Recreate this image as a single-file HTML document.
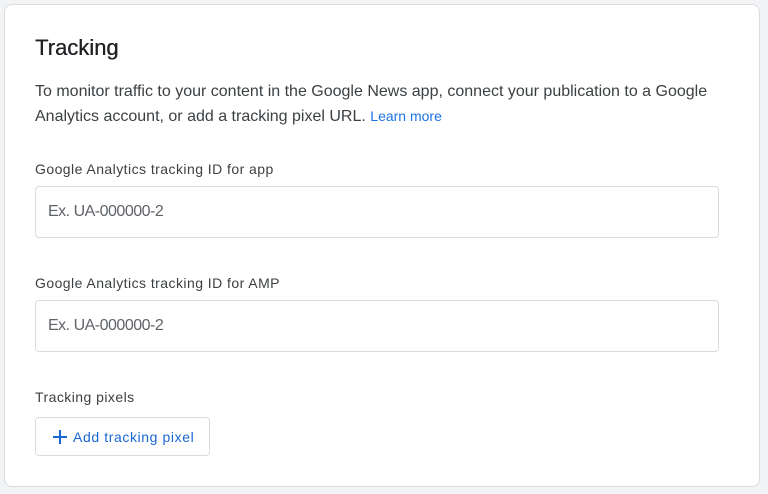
<!DOCTYPE html>
<html><head><style>
body{margin:0;width:768px;height:494px;background:#f1f3f4;font-family:"Liberation Sans",sans-serif;position:relative;overflow:hidden}
.card{position:absolute;left:4px;top:4px;width:754px;height:481px;background:#fff;border:1px solid #dadce0;border-radius:8px}
.a{position:absolute;white-space:nowrap}
.t{left:35px;top:35px;font-size:22px;color:#202124;text-shadow:0.3px 0 0 #202124}
.p{left:35px;top:80px;font-size:16px;line-height:24px;color:#3c4043}
.p a{color:#1a73e8;font-size:14px;text-decoration:none}
.l{left:35px;font-size:14px;color:#3c4043;letter-spacing:0.45px}
.in{position:absolute;left:35px;width:682px;height:50px;border:1px solid #dadce0;border-radius:4px;box-sizing:content-box}
.in span{position:absolute;left:12px;top:16px;font-size:16px;color:#5f6368;letter-spacing:-0.5px}
.b{position:absolute;left:35px;top:417px;width:173px;height:37px;border:1px solid #dadce0;border-radius:4px;color:#1967d2;font-size:14px;letter-spacing:0.6px}
</style></head><body>
<div class="card"></div>
<div class="a t">Tracking</div>
<div class="a p">To monitor traffic to your content in the Google News app, connect your publication to a Google<br>Analytics account, or add a tracking pixel URL. <a>Learn more</a></div>
<div class="a l" style="top:161px">Google Analytics tracking ID for app</div>
<div class="in" style="top:186px"><span>Ex. UA-000000-2</span></div>
<div class="a l" style="top:275px">Google Analytics tracking ID for AMP</div>
<div class="in" style="top:300px"><span>Ex. UA-000000-2</span></div>
<div class="a l" style="top:389px">Tracking pixels</div>
<div class="b"><svg style="position:absolute;left:16px;top:11px" width="16" height="16" viewBox="0 0 16 16"><path d="M8 1v14M1 8h14" stroke="#1967d2" stroke-width="2"/></svg><span class="a" style="left:37px;top:11px">Add tracking pixel</span></div>
</body></html>
